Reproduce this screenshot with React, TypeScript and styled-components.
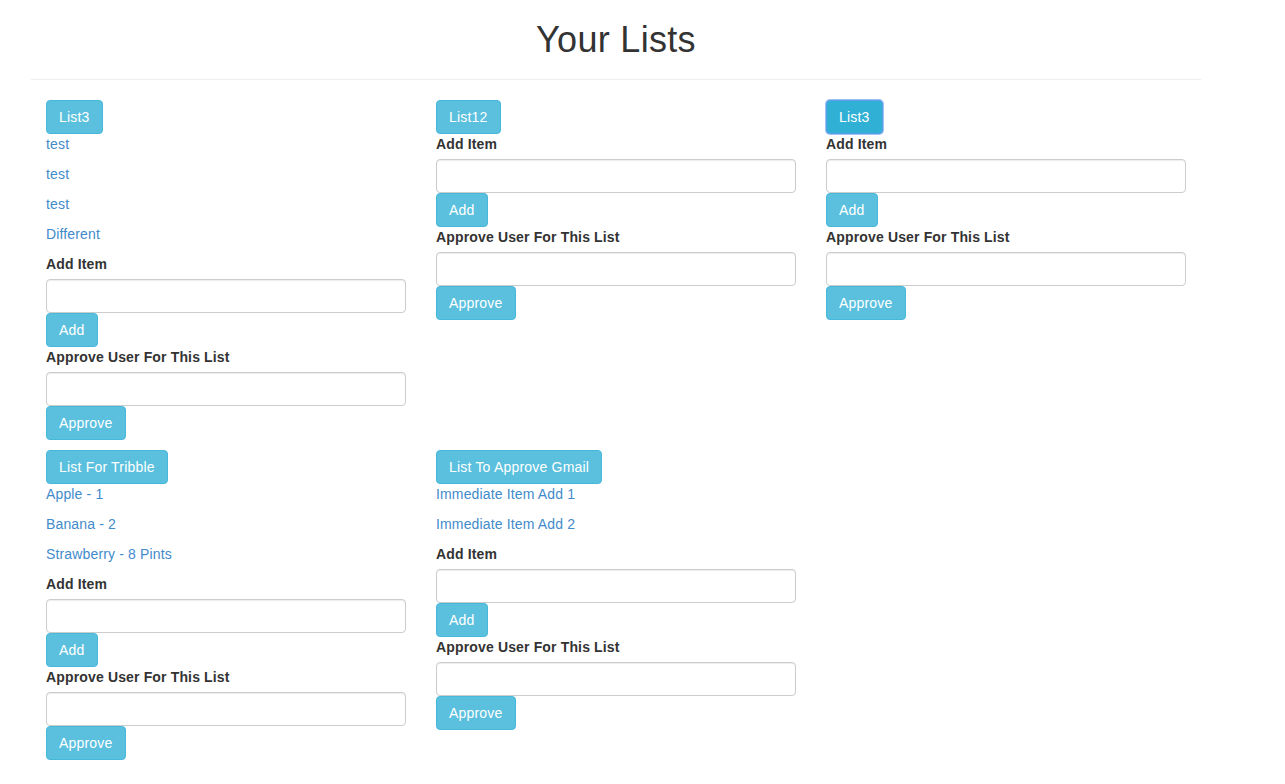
import React from "react";
import styled, { createGlobalStyle, css } from "styled-components";

const GlobalStyle = createGlobalStyle`
  html, body { margin: 0; padding: 0; background: #fff; }
  body {
    font-family: "Liberation Sans", Arial, Helvetica, sans-serif;
    font-size: 14px;
    line-height: 1.42857143;
    letter-spacing: 0.15px;
    color: #333;
  }
  * { box-sizing: border-box; }
`;

const Container = styled.div`
  width: 1170px;
  margin-left: 31px;
  padding: 0 15px;
`;

const Title = styled.h1`
  margin: 20px 0 0;
  font-size: 36px;
  font-weight: 500;
  line-height: 39px;
  letter-spacing: 0.3px;
  text-align: center;
  color: #333;
`;

const Rule = styled.hr`
  margin: 20px -15px;
  border: 0;
  border-top: 1px solid #eee;
  height: 0;
`;

const Grid = styled.div`
  display: grid;
  grid-template-columns: repeat(3, 390px);
  align-items: start;
  margin: 0 -15px;
  row-gap: 10px;
`;

const Column = styled.div`
  padding: 0 15px;
  display: flex;
  flex-direction: column;
  align-items: flex-start;
`;

const Button = styled.button<{ $focused?: boolean }>`
  display: inline-block;
  font-family: inherit;
  font-size: 14px;
  letter-spacing: 0.2px;
  line-height: 1.42857143;
  padding: 6px 12px;
  border-radius: 4px;
  border: 1px solid #46b8da;
  background: #5bc0de;
  color: #fff;
  cursor: pointer;
  white-space: nowrap;
  ${(p) =>
    p.$focused &&
    css`
      background: #31b0d5;
      border-color: #5b9ee8;
      box-shadow: 0 0 0 1px #9dc2f5;
      outline: none;
    `}
`;

const Item = styled.a`
  display: block;
  margin: 0 0 10px;
  color: #428bca;
  text-decoration: none;
  line-height: 20px;
`;

const Label = styled.label`
  display: block;
  font-weight: bold;
  margin-bottom: 5px;
  color: #333;
`;

const Input = styled.input`
  display: block;
  width: 360px;
  height: 34px;
  padding: 6px 12px;
  font-size: 14px;
  font-family: inherit;
  color: #555;
  background: #fff;
  border: 1px solid #ccc;
  border-radius: 4px;
  box-shadow: inset 0 1px 1px rgba(0, 0, 0, 0.075);
`;

type ListData = { name: string; items: string[]; focused?: boolean };

const lists: ListData[] = [
  { name: "List3", items: ["test", "test", "test", "Different"] },
  { name: "List12", items: [] },
  { name: "List3", items: [], focused: true },
  { name: "List For Tribble", items: ["Apple - 1", "Banana - 2", "Strawberry - 8 Pints"] },
  { name: "List To Approve Gmail", items: ["Immediate Item Add 1", "Immediate Item Add 2"] },
];

const ListCard: React.FC<{ list: ListData }> = ({ list }) => (
  <Column>
    <Button $focused={list.focused}>{list.name}</Button>
    {list.items.map((it, i) => (
      <Item key={i} href="#">
        {it}
      </Item>
    ))}
    <Label>Add Item</Label>
    <Input type="text" />
    <Button>Add</Button>
    <Label>Approve User For This List</Label>
    <Input type="text" />
    <Button>Approve</Button>
  </Column>
);

export default function App() {
  return (
    <>
      <GlobalStyle />
      <Container>
        <Title>Your Lists</Title>
        <Rule />
        <Grid>
          {lists.map((l, i) => (
            <ListCard key={i} list={l} />
          ))}
        </Grid>
      </Container>
    </>
  );
}
